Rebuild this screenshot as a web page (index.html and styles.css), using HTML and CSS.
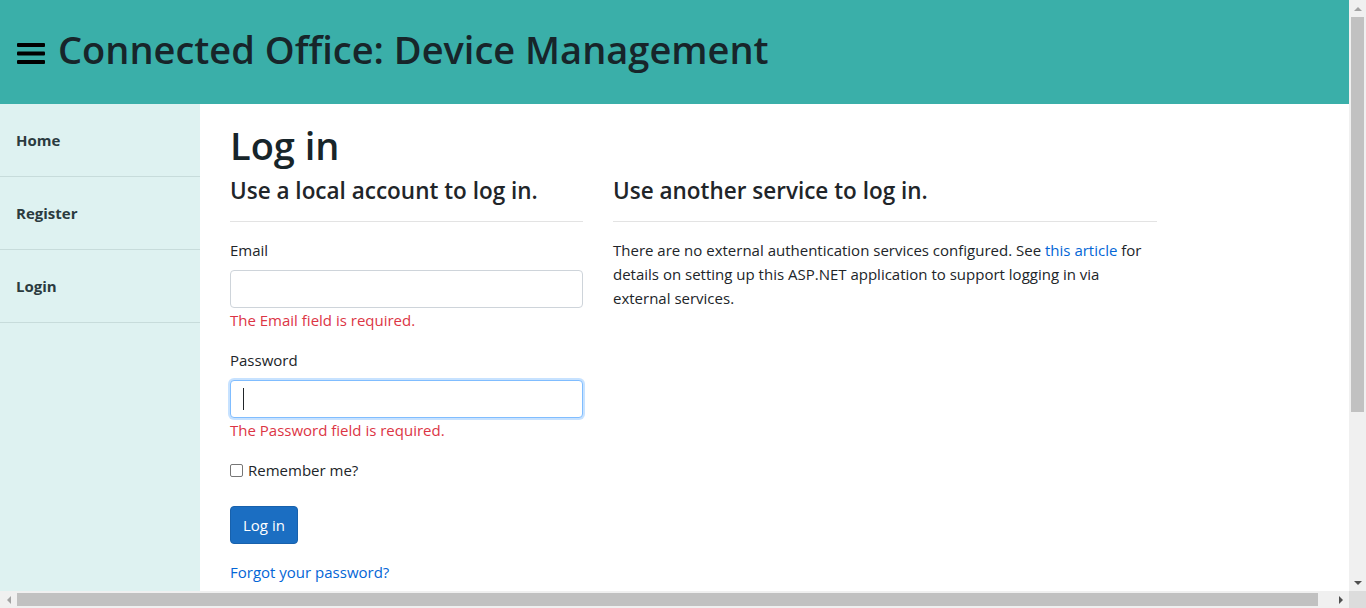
FILE: index.html
```html
<!DOCTYPE html>
<html lang="en">
<head>
<meta charset="utf-8">
<title>Log in - Connected Office</title>
<link rel="stylesheet" href="styles.css">
</head>
<body>
<div class="window">
  <div class="viewport">
    <header class="topbar">
      <svg class="burger" width="28" height="21" viewBox="0 0 28 21" aria-hidden="true">
        <rect x="0" y="0" width="28" height="4" rx="1" fill="#000"/>
        <rect x="0" y="8.5" width="28" height="4" rx="1" fill="#000"/>
        <rect x="0" y="17" width="28" height="4" rx="1" fill="#000"/>
      </svg>
      <h1 class="brand">Connected Office: Device Management</h1>
    </header>
    <div class="layout">
      <nav class="sidebar">
        <a class="nav-item" href="#">Home</a>
        <a class="nav-item" href="#">Register</a>
        <a class="nav-item" href="#">Login</a>
      </nav>
      <main class="main">
        <h1 class="page-title">Log in</h1>
        <div class="row">
          <section class="col-local">
            <h4 class="section-title">Use a local account to log in.</h4>
            <hr class="rule">
            <div class="field">
              <label class="label">Email</label>
              <input class="input" type="text">
              <span class="error">The Email field is required.</span>
            </div>
            <div class="field">
              <label class="label">Password</label>
              <div class="input focused"><span class="caret"></span></div>
              <span class="error">The Password field is required.</span>
            </div>
            <label class="check">
              <span class="box"></span>
              <span>Remember me?</span>
            </label>
            <button class="btn" type="button">Log in</button>
            <a class="link forgot" href="#">Forgot your password?</a>
          </section>
          <section class="col-ext">
            <h4 class="section-title">Use another service to log in.</h4>
            <hr class="rule">
            <p class="text">There are no external authentication services configured. See <a class="link" href="#">this article</a> for details on setting up this ASP.NET application to support logging in via external services.</p>
          </section>
        </div>
      </main>
    </div>
  </div>
  <div class="vscroll">
    <span class="arrow up"></span>
    <div class="vtrack"><div class="vthumb"></div></div>
    <span class="arrow down"></span>
  </div>
  <div class="hscroll">
    <span class="arrow left"></span>
    <div class="htrack"><div class="hthumb"></div></div>
    <span class="arrow right"></span>
  </div>
  <div class="corner"></div>
</div>
</body>
</html>
```

FILE: styles.css
```css
* { box-sizing: border-box; }
html, body { margin: 0; height: 100%; overflow: hidden; }
body {
  font-family: "Open Sans", "Noto Sans", sans-serif;
  font-size: 16px;
  line-height: 24px;
  color: #212529;
  background: #fff;
}
.window {
  display: grid;
  grid-template-columns: 1fr 17px;
  grid-template-rows: 1fr 17px;
  height: 608px;
  width: 1366px;
}
.viewport {
  overflow: hidden;
  display: flex;
  flex-direction: column;
}
.topbar {
  height: 104px;
  flex: none;
  background: #3aafa9;
  display: flex;
  align-items: center;
  padding-left: 17px;
  gap: 13px;
}
.burger { margin-top: 2px; }
.brand {
  margin: 0 0 6px 0;
  font-size: 38px;
  font-weight: 600;
  color: #17252a;
  line-height: 48px;
  white-space: nowrap;
}
.layout {
  flex: 1;
  display: flex;
}
.sidebar {
  width: 200px;
  flex: none;
  background: #def2f1;
  display: flex;
  flex-direction: column;
}
.nav-item {
  height: 73px;
  display: flex;
  align-items: center;
  padding-left: 16px;
  border-bottom: 1px solid #c7dcdb;
  color: #2b3b3f;
  font-weight: 700;
  font-size: 15px;
  text-decoration: none;
}
.main {
  flex: 1;
  padding: 17px 30px 0 30px;
}
.page-title {
  margin: 0;
  font-size: 38px;
  font-weight: 600;
  line-height: 48px;
  color: #17252a;
}
.row {
  display: flex;
  gap: 30px;
  margin-top: 6px;
}
.col-local { width: 353px; display: flex; flex-direction: column; align-items: flex-start; }
.col-ext { width: 544px; }
.section-title {
  margin: 0;
  font-size: 22.5px;
  font-weight: 600;
  line-height: 32px;
  color: #212529;
}
.rule {
  margin: 14px 0 16px;
  border: 0;
  border-top: 1px solid #e3e3e3;
  width: 100%;
}
.field { width: 100%; display: flex; flex-direction: column; margin-bottom: 16px; }
.label { display: block; margin-bottom: 8px; font-size: 15px; }
.input {
  display: block;
  width: 100%;
  height: 38px;
  border: 1px solid #ced4da;
  border-radius: 4px;
  background: #fff;
  padding: 0 12px;
  font: inherit;
}
.input.focused {
  border-color: #80bdff;
  box-shadow: 0 0 0 2px rgba(0,123,255,0.22);
  display: flex;
  align-items: center;
}
.caret { width: 1px; height: 22px; background: #212529; }
.error { color: #dc3545; font-size: 15px; line-height: 24px; }
.check {
  display: flex;
  align-items: center;
  gap: 5px;
  font-size: 15px;
  margin-top: 0;
  margin-bottom: 24px;
}
.box {
  width: 13px; height: 13px;
  border: 1px solid #767676;
  border-radius: 2px;
  background: #fff;
}
.btn {
  background: #1b6ec2;
  border: 1px solid #1861ac;
  color: #fff;
  border-radius: 4px;
  height: 38px;
  padding: 0 12px;
  font: inherit;
  font-size: 15px;
  margin-bottom: 16px;
}
.link { color: #0366d6; text-decoration: none; }
.forgot { font-size: 15px; }
.text { margin: 0; font-size: 15px; }

/* scrollbars */
.vscroll {
  background: #f0f0f0;
  display: flex;
  flex-direction: column;
  align-items: center;
}
.vtrack { flex: 1; width: 100%; padding: 0 2px; }
.vthumb { height: 395px; background: #c1c1c1; }
.hscroll {
  background: #f0f0f0;
  display: flex;
  align-items: center;
}
.htrack { flex: 1; height: 100%; padding: 2px 0; }
.hthumb { width: 1301px; height: 100%; background: #c1c1c1; }
.corner { background: #dcdcdc; }
.arrow { width: 17px; height: 17px; flex: none; position: relative; }
.arrow::after {
  content: "";
  position: absolute;
  left: 50%; top: 50%;
  width: 0; height: 0;
  border: 4px solid transparent;
}
.arrow.up::after { border-bottom-color: #a3a3a3; transform: translate(-50%, -75%); }
.arrow.down::after { border-top-color: #505050; transform: translate(-50%, -25%); }
.arrow.left::after { border-right-color: #a3a3a3; transform: translate(-75%, -50%); }
.arrow.right::after { border-left-color: #505050; transform: translate(-25%, -50%); }
```
